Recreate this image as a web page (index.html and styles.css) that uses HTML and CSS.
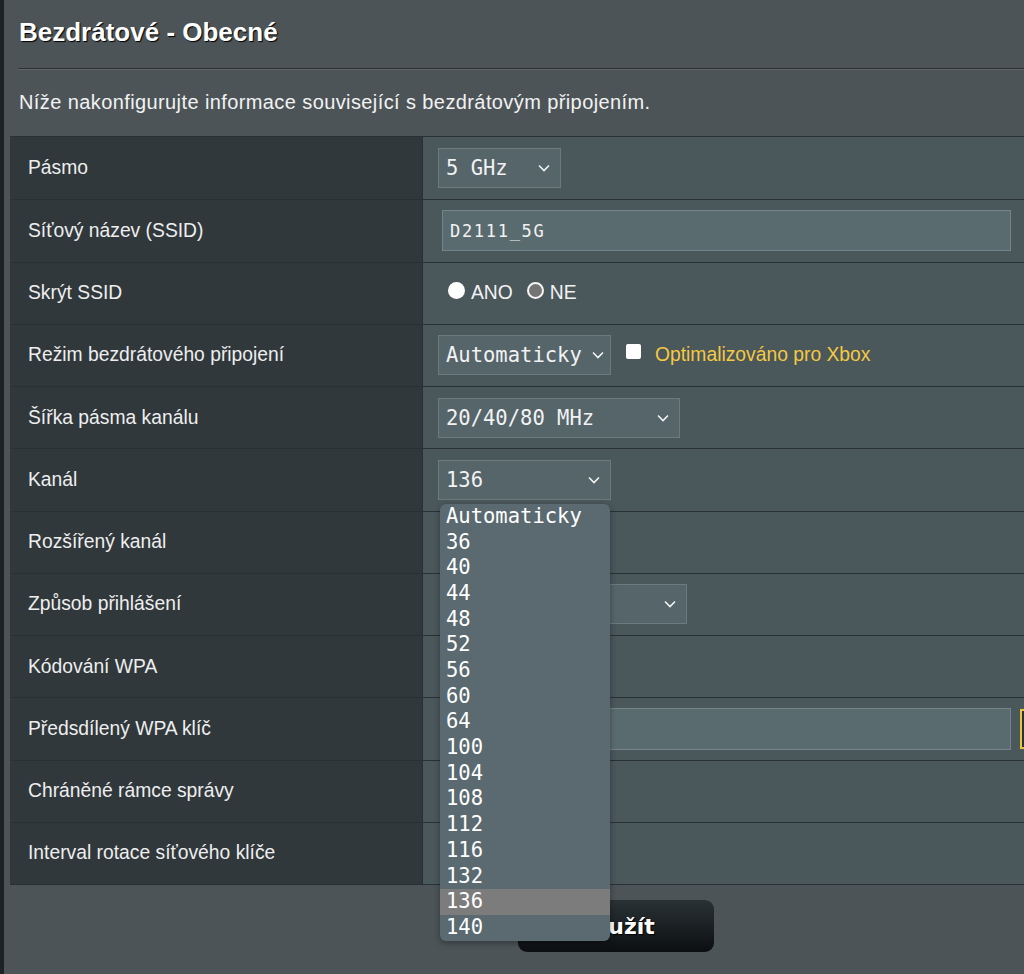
FILE: index.html
```html
<!DOCTYPE html>
<html lang="cs">
<head>
    <meta charset="UTF-8">
    <meta name="viewport" content="width=device-width, initial-scale=1.0">
    <title>Bezdrátové - Obecné</title>
    <link rel="stylesheet" href="styles.css">
</head>
<body>
<div class="page">
    <div class="head">
        <h1>Bezdrátové - Obecné</h1>
    </div>
    <p class="desc">Níže nakonfigurujte informace související s bezdrátovým připojením.</p>

    <div class="form">
        <div class="row">
            <div class="label">Pásmo</div>
            <div class="value">
                <div class="select w-band"><span>5 GHz</span><svg class="chev" width="12" height="8" viewBox="0 0 12 8"><path d="M1 1.5 L6 6.5 L11 1.5" /></svg></div>
            </div>
        </div>
        <div class="row">
            <div class="label">Síťový název (SSID)</div>
            <div class="value">
                <div class="text-input ssid">D2111_5G</div>
            </div>
        </div>
        <div class="row">
            <div class="label">Skrýt SSID</div>
            <div class="value radios">
                <span class="radio"></span><span class="radio-label">ANO</span>
                <span class="radio checked"></span><span class="radio-label">NE</span>
            </div>
        </div>
        <div class="row">
            <div class="label">Režim bezdrátového připojení</div>
            <div class="value">
                <div class="select w-mode"><span>Automaticky</span><svg class="chev" width="12" height="8" viewBox="0 0 12 8"><path d="M1 1.5 L6 6.5 L11 1.5" /></svg></div>
                <span class="checkbox"></span>
                <span class="xbox">Optimalizováno pro Xbox</span>
            </div>
        </div>
        <div class="row">
            <div class="label">Šířka pásma kanálu</div>
            <div class="value">
                <div class="select w-width"><span>20/40/80 MHz</span><svg class="chev" width="12" height="8" viewBox="0 0 12 8"><path d="M1 1.5 L6 6.5 L11 1.5" /></svg></div>
            </div>
        </div>
        <div class="row">
            <div class="label">Kanál</div>
            <div class="value">
                <div class="select w-chan open"><span>136</span><svg class="chev" width="12" height="8" viewBox="0 0 12 8"><path d="M1 1.5 L6 6.5 L11 1.5" /></svg>
                    <ul class="popup">
                        <li>Automaticky</li>
                        <li>36</li>
                        <li>40</li>
                        <li>44</li>
                        <li>48</li>
                        <li>52</li>
                        <li>56</li>
                        <li>60</li>
                        <li>64</li>
                        <li>100</li>
                        <li>104</li>
                        <li>108</li>
                        <li>112</li>
                        <li>116</li>
                        <li>132</li>
                        <li class="sel">136</li>
                        <li>140</li>
                    </ul>
                </div>
            </div>
        </div>
        <div class="row">
            <div class="label">Rozšířený kanál</div>
            <div class="value">
                <div class="select w-hidden"></div>
            </div>
        </div>
        <div class="row">
            <div class="label">Způsob přihlášení</div>
            <div class="value">
                <div class="select w-auth"><span></span><svg class="chev" width="12" height="8" viewBox="0 0 12 8"><path d="M1 1.5 L6 6.5 L11 1.5" /></svg></div>
            </div>
        </div>
        <div class="row">
            <div class="label">Kódování WPA</div>
            <div class="value">
                <div class="select w-hidden"></div>
            </div>
        </div>
        <div class="row">
            <div class="label">Předsdílený WPA klíč</div>
            <div class="value">
                <div class="text-input wpa"></div>
                <span class="show-key"></span>
            </div>
        </div>
        <div class="row">
            <div class="label">Chráněné rámce správy</div>
            <div class="value">
                <div class="select w-hidden"></div>
            </div>
        </div>
        <div class="row">
            <div class="label">Interval rotace síťového klíče</div>
            <div class="value">
                <div class="text-input small"></div>
            </div>
        </div>
    </div>

    <div class="actions">
        <button class="apply">Použít</button>
    </div>
</div>
</body>
</html>
```

FILE: styles.css
```css
html, body {
    margin: 0;
    height: 100%;
}
body {
    background-color: #4c5458;
    font-family: 'Liberation Sans', Arial, sans-serif;
    color: #f0f0f0;
    overflow: hidden;
}
.page {
    border-left: 4px solid #1c2225;
    padding-left: 6px;
    min-height: 100%;
    box-sizing: border-box;
    width: 1300px;
}
.head {
    margin-left: 8px;
    width: 1100px;
    border-bottom: 1px solid #2b3134;
    box-shadow: 0 1px 0 #5f676b;
}
h1 {
    margin: 0;
    padding: 17px 0 21px 1px;
    font-size: 26px;
    line-height: 30px;
    font-weight: bold;
    color: #ffffff;
    text-shadow: 1px 1px 1px #000;
}
.desc {
    margin: 22px 0 0 9px;
    font-size: 20px;
    letter-spacing: 0.4px;
    line-height: 22px;
    color: #f2f2f2;
}
.form {
    margin-top: 23px;
    width: 1212px;
    border-top: 1px solid #2a3134;
    border-bottom: 1px solid #2a3134;
}
.row {
    display: grid;
    grid-template-columns: 413px 1fr;
    height: 62.25px;
    box-sizing: border-box;
    border-top: 1px solid #2a3134;
}
.row:first-child {
    border-top: none;
}
.label {
    background-color: #30383c;
    padding-left: 18px;
    display: flex;
    align-items: center;
    font-size: 19.3px;
    color: #eeeeee;
    border-right: 1px solid #283033;
}
.value {
    background-color: #4a575b;
    padding-left: 15px;
    display: flex;
    align-items: center;
}
.select {
    position: relative;
    height: 40px;
    box-sizing: border-box;
    border: 1px solid #6c7a7f;
    background-color: #55656a;
    padding: 0 10px 0 7px;
    display: flex;
    align-items: center;
    justify-content: space-between;
    font-family: 'DejaVu Sans Mono', monospace;
    font-size: 20.5px;
    color: #f2f2f2;
}
.chev {
    fill: none;
    stroke: #f2f2f2;
    stroke-width: 1.6;
}
.w-band { width: 123px; }
.w-mode { width: 173px; padding-right: 6px; }
.w-width { width: 242px; }
.w-chan { width: 173px; }
.w-auth { width: 247px; margin-left: 2px; }
.w-hidden { width: 160px; margin-left: 4px; }

.text-input {
    height: 41px;
    box-sizing: border-box;
    border: 1px solid #74848a;
    background-color: #5a6b70;
    display: flex;
    align-items: center;
    padding-left: 7px;
    font-family: 'DejaVu Sans Mono', monospace;
    font-size: 17px;
    letter-spacing: 1.7px;
    color: #f2f2f2;
}
.ssid {
    width: 569px;
    margin-left: 4px;
}
.wpa {
    width: 569px;
    height: 42px;
    margin-left: 4px;
}
.small {
    width: 120px;
    margin-left: 4px;
}
.show-key {
    width: 24px;
    height: 40px;
    margin-left: 9px;
    box-sizing: border-box;
    border: 2px solid #e8c43c;
    background-color: #2b3134;
}

.radios {
    padding-left: 25px;
    font-size: 19.3px;
}
.radio {
    width: 17px;
    height: 17px;
    border-radius: 50%;
    background-color: #ffffff;
    margin-top: -6px;
    box-sizing: border-box;
    flex-shrink: 0;
}
.radio.checked {
    border: 2px solid #f4f4f4;
    background-color: #747474;
}
.radio-label {
    margin: 0 14px 0 6px;
    color: #f2f2f2;
}
.checkbox {
    width: 15px;
    height: 15px;
    border-radius: 2px;
    background-color: #ffffff;
    margin: -8px 0 0 15px;
}
.xbox {
    margin-left: 14px;
    font-size: 19.3px;
    color: #f5c842;
}

.popup {
    position: absolute;
    top: 43px;
    left: 1px;
    width: 170px;
    margin: 0;
    padding: 0;
    list-style: none;
    background-color: #5a6a70;
    border-radius: 6px;
    box-shadow: 0 2px 6px rgba(0, 0, 0, 0.35);
    z-index: 10;
    overflow: hidden;
}
.popup li {
    height: 25.7px;
    line-height: 25.7px;
    padding-left: 6px;
    font-size: 20.5px;
    color: #ffffff;
}
.popup li.sel {
    background-color: #7c7c7c;
}

.actions {
    width: 1212px;
    display: flex;
    justify-content: center;
    margin-top: 15px;
}
.apply {
    width: 196px;
    height: 52px;
    border: none;
    border-radius: 9px;
    background: linear-gradient(to bottom, #2a3236, #0c0f11);
    color: #ffffff;
    font-family: 'DejaVu Sans', Verdana, sans-serif;
    font-size: 22px;
    font-weight: bold;
    text-shadow: 1px 1px 1px #000;
    cursor: pointer;
}
```
